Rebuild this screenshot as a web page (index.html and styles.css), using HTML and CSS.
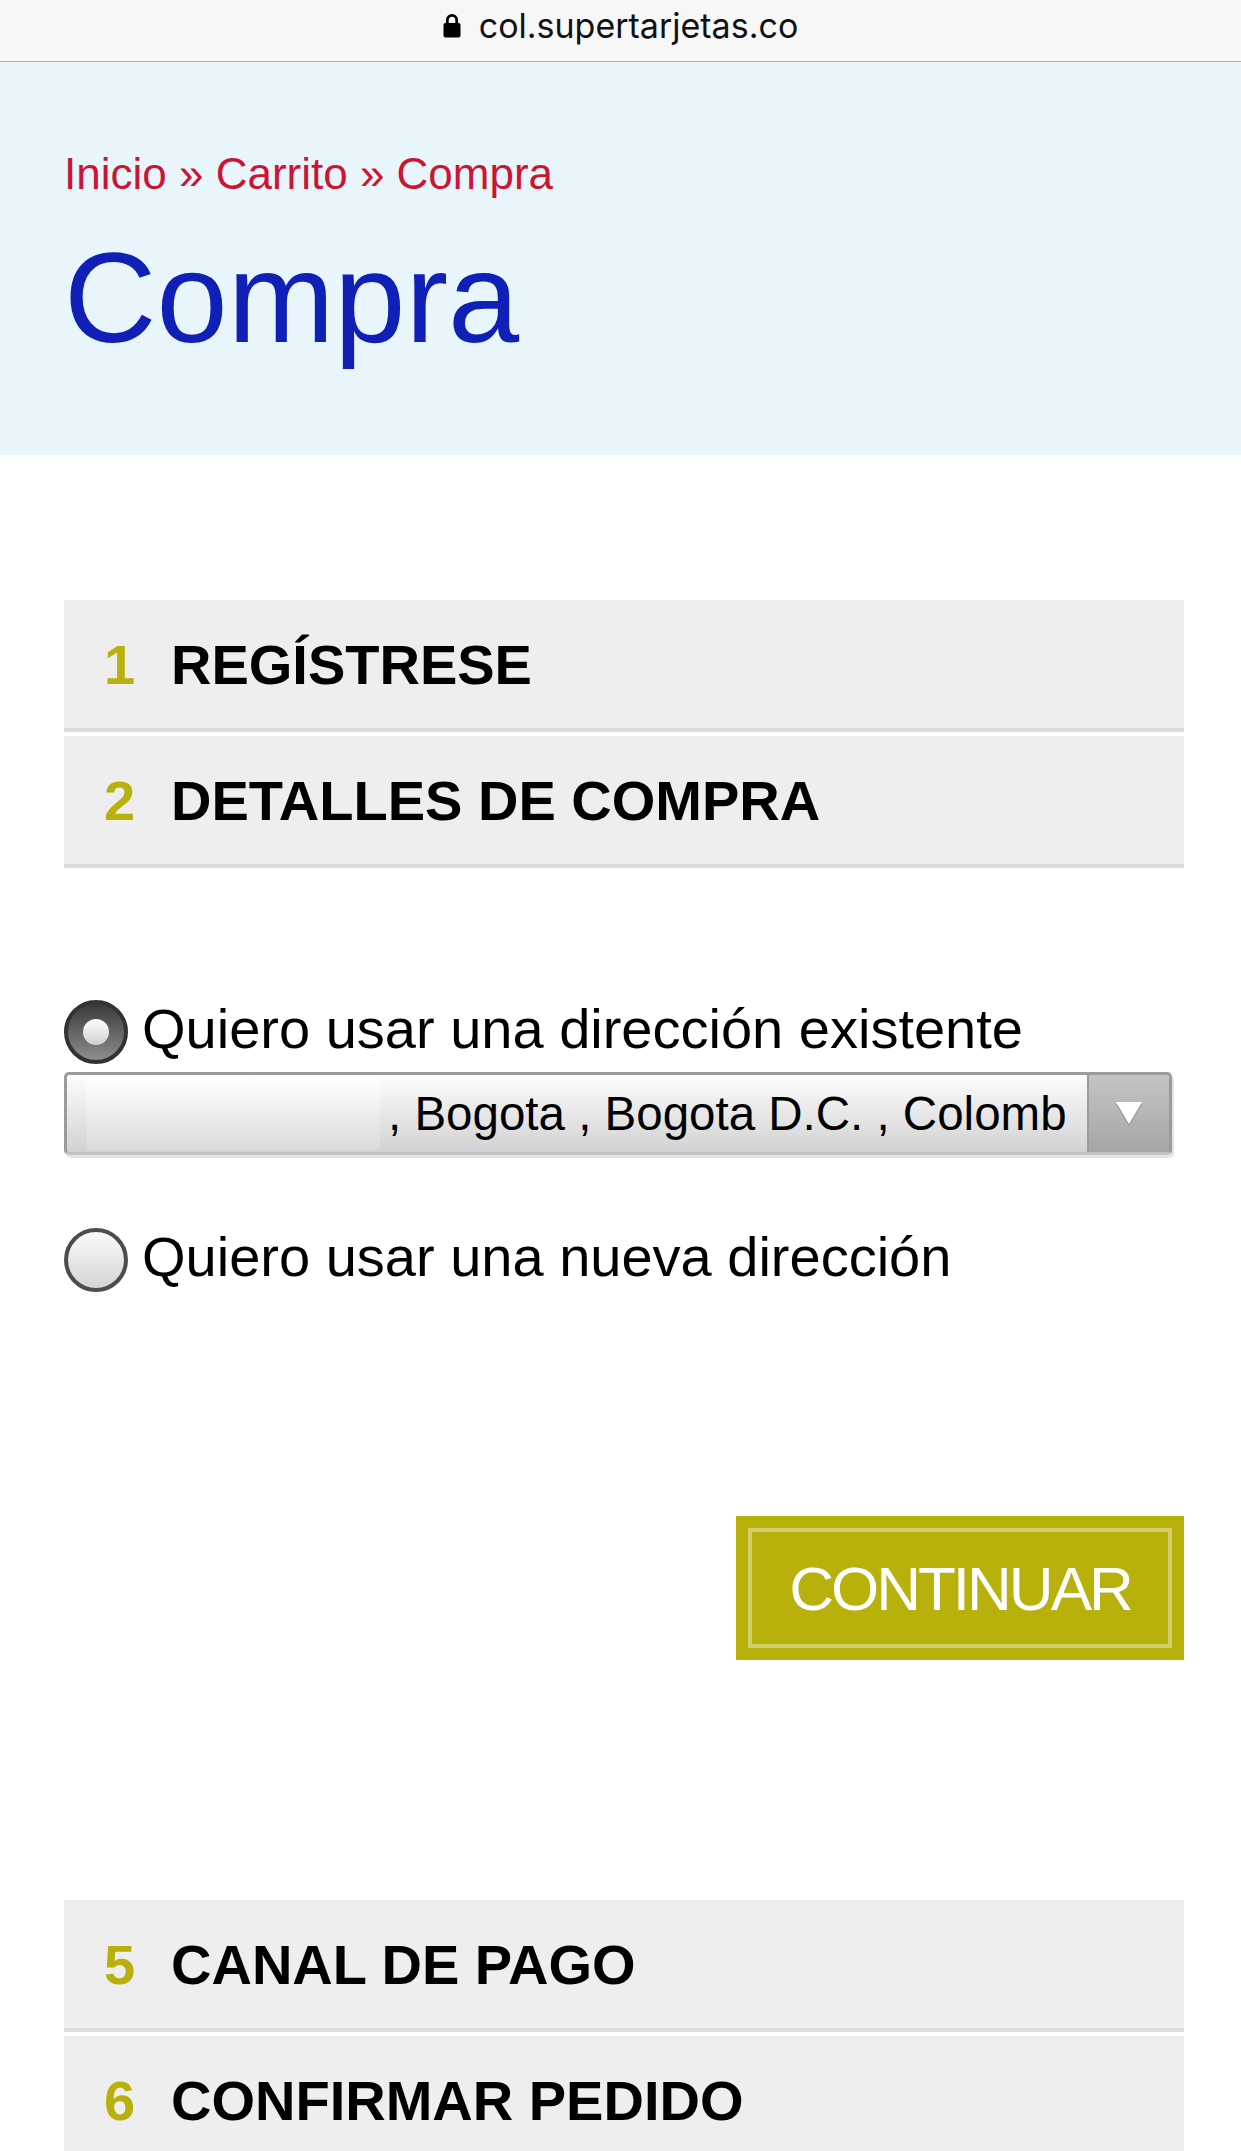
FILE: index.html
```html
<!DOCTYPE html>
<html lang="es">
<head>
    <meta charset="UTF-8">
    <meta name="viewport" content="width=device-width, initial-scale=1.0">
    <title>Compra</title>
    <link rel="stylesheet" href="styles.css">
</head>
<body>
    <!-- Browser address bar -->
    <div class="urlbar">
        <svg class="lock" width="18" height="26" viewBox="0 0 18 26">
            <path d="M4.3 12 V8 a4.7 4.7 0 0 1 9.4 0 V12" fill="none" stroke="#000" stroke-width="2.8"/>
            <rect x="0.5" y="11" width="17" height="14.5" rx="2" fill="#000"/>
        </svg>
        <span>col.supertarjetas.co</span>
    </div>

    <!-- Page header -->
    <header class="page-head">
        <div class="crumbs">
            <a href="#">Inicio</a> » <a href="#">Carrito</a> » <span>Compra</span>
        </div>
        <h1>Compra</h1>
    </header>

    <main class="checkout">
        <div class="step"><span class="num">1</span><span class="label">REGÍSTRESE</span></div>
        <div class="step"><span class="num">2</span><span class="label">DETALLES DE COMPRA</span></div>

        <!-- Address choice -->
        <div class="address">
            <label class="opt">
                <span class="radio on"></span>
                <span class="opt-text">Quiero usar una dirección existente</span>
            </label>
            <div class="select">
                <div class="select-value">
                    <span class="blank"></span>
                    <span class="select-text">, Bogota , Bogota D.C. , Colombia</span>
                </div>
                <div class="select-arrow">
                    <svg width="30" height="26" viewBox="0 0 30 26">
                        <polygon points="2,3 28,3 15,25" fill="#7a7a7a" opacity="0.5"/>
                        <polygon points="2,1 28,1 15,23" fill="#fff"/>
                    </svg>
                </div>
            </div>
            <label class="opt opt-new">
                <span class="radio"></span>
                <span class="opt-text">Quiero usar una nueva dirección</span>
            </label>
        </div>

        <div class="actions">
            <button class="continue">CONTINUAR</button>
        </div>

        <div class="step step-later"><span class="num">5</span><span class="label">CANAL DE PAGO</span></div>
        <div class="step"><span class="num">6</span><span class="label">CONFIRMAR PEDIDO</span></div>
    </main>
</body>
</html>
```

FILE: styles.css
```css
body {
    margin: 0;
    font-family: "Liberation Sans", Arial, sans-serif;
    color: #000;
    background: #fff;
}
.urlbar {
    height: 61px;
    border-bottom: 1px solid #a9b3b8;
    background: #f7f7f7;
    display: flex;
    align-items: center;
    justify-content: center;
    gap: 18px;
    font-family: Inter, "Liberation Sans", sans-serif;
    font-size: 34px;
    color: #111;
}
.urlbar span {
    margin-top: -10px;
}
.lock {
    margin-top: -12px;
}
.page-head {
    background: #e8f5fa;
    padding: 87px 64px 93px;
}
.crumbs {
    font-size: 44px;
    line-height: 50px;
    color: #cc1532;
}
.crumbs a {
    color: #cc1532;
    text-decoration: none;
}
.page-head h1 {
    margin: 35px 0 0;
    font-size: 128px;
    line-height: 128px;
    font-weight: normal;
    color: #1020b6;
}
.checkout {
    padding: 145px 57px 0 64px;
}
.step {
    height: 128px;
    background: #eeeeee;
    border-bottom: 4px solid #dcdcdc;
    display: flex;
    align-items: center;
    padding-left: 40px;
    font-size: 56px;
    font-weight: bold;
}
.step + .step {
    margin-top: 4px;
}
.step .num {
    width: 67px;
    color: #b8b00c;
}
.step-later {
    margin-top: 240px;
}
.address {
    margin-top: 132px;
}
.opt {
    display: flex;
    align-items: center;
    height: 64px;
    gap: 14px;
    font-size: 56px;
    line-height: 64px;
}
.opt-text {
    margin-top: -6px;
}
.opt-new {
    margin-top: 73px;
}
.radio {
    width: 64px;
    height: 64px;
    flex: none;
    box-sizing: border-box;
    border-radius: 50%;
    border: 4px solid #4d4d4d;
    background: linear-gradient(#fbfbfb, #d4d4d4);
    position: relative;
}
.radio.on {
    border-color: #333;
    background: linear-gradient(#3a3a3a, #8e8e8e);
}
.radio.on::after {
    content: "";
    position: absolute;
    left: 50%;
    top: 50%;
    width: 26px;
    height: 26px;
    margin: -13px 0 0 -13px;
    border-radius: 50%;
    background: linear-gradient(#ffffff, #cfcfcf);
}
.select {
    margin-top: 8px;
    width: 1108px;
    height: 83px;
    box-sizing: border-box;
    border: 3px solid #9b9b9b;
    border-bottom-color: #c2c2c2;
    border-radius: 5px;
    box-shadow: 2px 3px 0 #e4e4e4;
    background: linear-gradient(#fdfdfd, #d2d2d2);
    display: flex;
    overflow: hidden;
}
.select-value {
    flex: 1;
    min-width: 0;
    margin: 0 22px 0 20px;
    display: flex;
    align-items: center;
    white-space: nowrap;
    overflow: hidden;
    font-size: 47.5px;
}
.blank {
    flex: none;
    width: 293px;
    height: 72px;
    margin-right: 8px;
    background: linear-gradient(#ffffff, #dadada);
}
.select-text {
    flex: none;
}
.select-arrow {
    width: 80px;
    flex: none;
    border-left: 2px solid #9c9c9c;
    background: linear-gradient(#c4c4c4, #a6a6a6);
    display: flex;
    align-items: center;
    justify-content: center;
}
.actions {
    margin-top: 224px;
    display: flex;
    justify-content: flex-end;
}
.continue {
    width: 448px;
    height: 144px;
    padding: 0;
    border: none;
    background: #b8b00b;
    color: #fff;
    font-family: "Liberation Sans", Arial, sans-serif;
    font-size: 62px;
    letter-spacing: -3px;
    cursor: pointer;
    box-shadow: inset 0 0 0 12px #b8b00b, inset 0 0 0 16px rgba(255, 255, 255, 0.4);
}
```
